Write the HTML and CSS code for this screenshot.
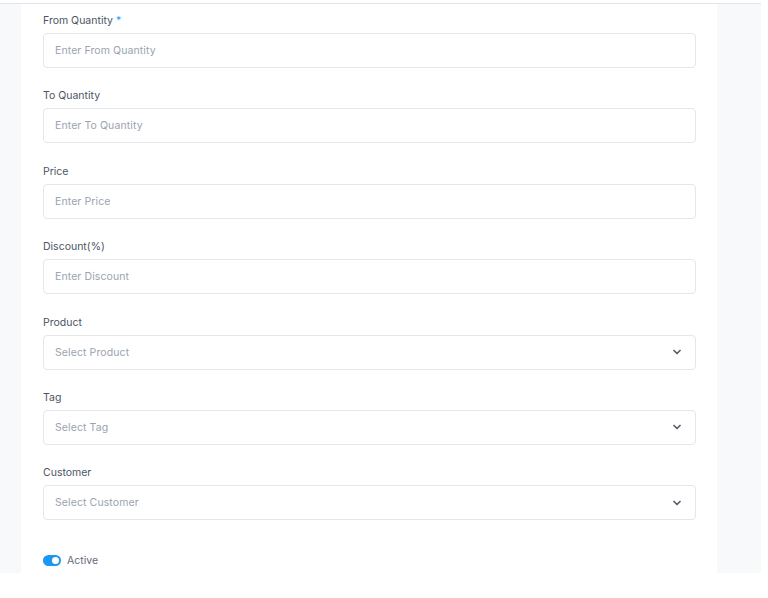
FILE: index.html
```html
<!DOCTYPE html>
<html lang="en">
<head>
  <meta charset="UTF-8">
  <meta name="viewport" content="width=device-width, initial-scale=1.0">
  <title>Quantity Discount</title>
  <link rel="stylesheet" href="styles.css">
</head>
<body>
  <div class="frame">
    <form class="card">
      <div class="form-group">
        <label>From Quantity <span class="req">*</span></label>
        <input type="text" placeholder="Enter From Quantity">
      </div>
      <div class="form-group">
        <label>To Quantity</label>
        <input type="text" placeholder="Enter To Quantity">
      </div>
      <div class="form-group">
        <label>Price</label>
        <input type="text" placeholder="Enter Price">
      </div>
      <div class="form-group">
        <label>Discount(%)</label>
        <input type="text" placeholder="Enter Discount">
      </div>
      <div class="form-group">
        <label>Product</label>
        <div class="select">
          <span>Select Product</span>
          <svg width="8" height="8" viewBox="0 0 8 8"><path d="M1 2.5l3 3 3-3" fill="none" stroke="#556070" stroke-width="1.7" stroke-linecap="round" stroke-linejoin="round"/></svg>
        </div>
      </div>
      <div class="form-group">
        <label>Tag</label>
        <div class="select">
          <span>Select Tag</span>
          <svg width="8" height="8" viewBox="0 0 8 8"><path d="M1 2.5l3 3 3-3" fill="none" stroke="#556070" stroke-width="1.7" stroke-linecap="round" stroke-linejoin="round"/></svg>
        </div>
      </div>
      <div class="form-group">
        <label>Customer</label>
        <div class="select">
          <span>Select Customer</span>
          <svg width="8" height="8" viewBox="0 0 8 8"><path d="M1 2.5l3 3 3-3" fill="none" stroke="#556070" stroke-width="1.7" stroke-linecap="round" stroke-linejoin="round"/></svg>
        </div>
      </div>
      <div class="switch-row">
        <span class="switch"><span class="knob"></span></span>
        <span class="switch-label">Active</span>
      </div>
    </form>
  </div>
</body>
</html>
```

FILE: styles.css
```css
body {
  margin: 0;
  padding: 0;
  background-color: #ffffff;
  font-family: Inter, "Noto Sans", Arial, sans-serif;
}
.frame {
  margin-top: 3px;
  width: 761px;
  height: 570px;
  box-sizing: border-box;
  border-top: 1px solid #e1e4ea;
  background-color: #f8f9fb;
  display: flex;
  padding: 0 44px 0 21px;
}
.card {
  flex: 1;
  background-color: #ffffff;
  padding: 10px 21px 0 22px;
}
.form-group {
  margin-bottom: 21.4px;
}
.form-group label {
  display: block;
  font-size: 10.5px;
  line-height: 14px;
  color: #4b5565;
  margin-bottom: 5px;
}
.req {
  color: #1e9bf5;
}
.form-group input,
.select {
  display: flex;
  align-items: center;
  justify-content: space-between;
  width: 100%;
  height: 35px;
  box-sizing: border-box;
  border: 1px solid #e3e6eb;
  border-radius: 4px;
  padding: 0 14px 0 11px;
  font-family: inherit;
  font-size: 10.5px;
  letter-spacing: 0.1px;
  color: #9aa3b0;
  background-color: #ffffff;
  outline: none;
}
.form-group input::placeholder {
  color: #9aa3b0;
}
.switch-row {
  display: flex;
  align-items: center;
  gap: 6px;
  margin-top: 34px;
}
.switch {
  display: flex;
  align-items: center;
  justify-content: flex-end;
  width: 18px;
  height: 11px;
  border-radius: 6px;
  background-color: #1a98f4;
  padding: 0 2px;
  box-sizing: border-box;
}
.knob {
  width: 7px;
  height: 7px;
  border-radius: 50%;
  background-color: #ffffff;
}
.switch-label {
  font-size: 10.5px;
  color: #5f6b7a;
}
```
